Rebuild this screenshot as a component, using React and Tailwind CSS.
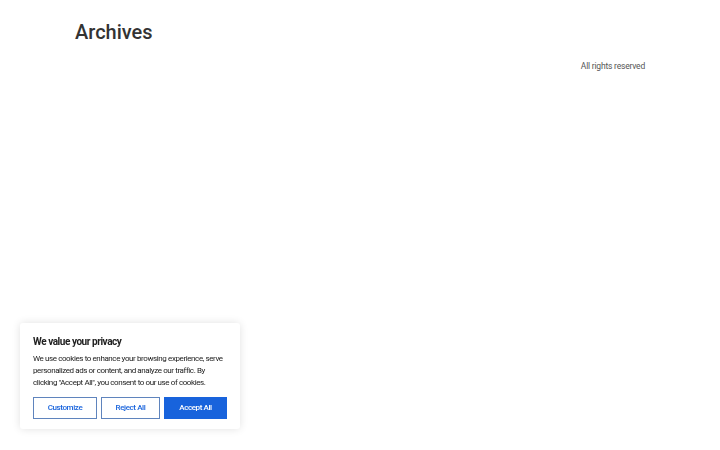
const CookieBanner = () => {
  return (
    <div className="fixed left-[20px] bottom-[21px] w-[220px] rounded-[3px] bg-white px-[13px] pt-[13px] pb-[10px] shadow-[0_0_8px_rgba(0,0,0,0.12)]">
      <p className="text-[10px] font-bold leading-[12px] tracking-[-0.45px] text-[#212121]">
        We value your privacy
      </p>
      <p className="mt-[5px] text-[8px] leading-[12px] tracking-[-0.4px] text-[#212121]">
        We use cookies to enhance your browsing experience, serve personalized
        ads or content, and analyze our traffic. By clicking "Accept All", you
        consent to our use of cookies.
      </p>
      <div className="mt-[8px] flex gap-[4px]">
        <button className="h-[22px] w-[64px] border border-[#5f84bd] text-[8px] font-medium tracking-[-0.4px] text-[#1863dc]">
          Customize
        </button>
        <button className="h-[22px] w-[59px] border border-[#5f84bd] text-[8px] font-medium tracking-[-0.4px] text-[#1863dc]">
          Reject All
        </button>
        <button className="h-[22px] w-[63px] border border-[#1863dc] bg-[#1863dc] text-[8px] font-medium tracking-[-0.4px] text-white">
          Accept All
        </button>
      </div>
    </div>
  );
};

export default function App() {
  return (
    <div className="min-h-[450px] bg-white font-['Roboto',sans-serif]">
      <div className="mx-auto w-[570px] pt-[19px]">
        <h1 className="text-[20px] font-medium leading-[26px] text-[#333]">
          Archives
        </h1>
        <p className="mt-[15px] text-right text-[8.5px] leading-[12px] tracking-[-0.2px] text-[#555]">
          All rights reserved
        </p>
      </div>
      <CookieBanner />
    </div>
  );
}
